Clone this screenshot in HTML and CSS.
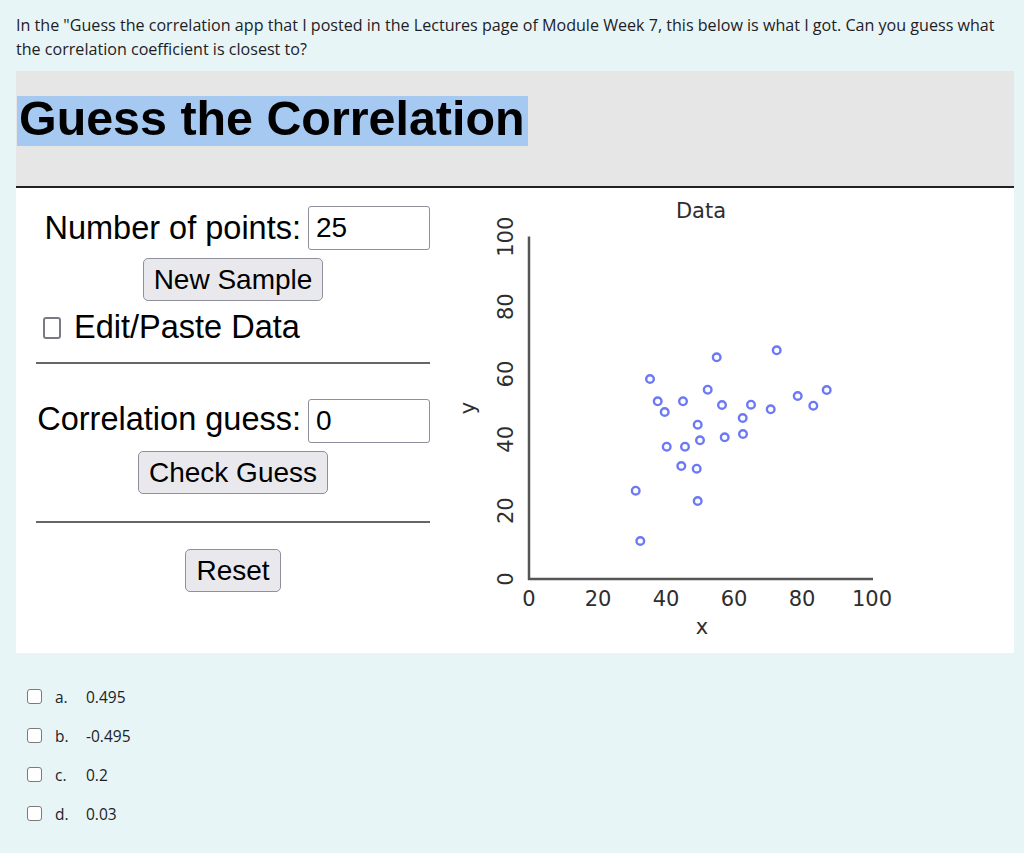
FILE: index.html
```html
<!DOCTYPE html>
<html lang="en">
<head>
<meta charset="utf-8">
<title>Guess the correlation</title>
<link rel="stylesheet" href="styles.css">
</head>
<body>
<p class="question">In the "Guess the correlation app that I posted in the Lectures page of Module Week 7, this below is what I got. Can you guess what<br>the correlation coefficient is closest to?</p>

<div class="shot">
  <div class="shot-head">
    <h1 class="app-title"><span class="hl">Guess the Correlation</span></h1>
  </div>
  <div class="shot-body">
    <div class="panel">
      <div class="field-row end">
        <label class="lbl">Number of points:</label>
        <div class="input">25</div>
      </div>
      <div class="btn-row"><span class="btn">New Sample</span></div>
      <div class="check-row"><span class="cb"></span><span class="lbl">Edit/Paste Data</span></div>
      <div class="rule r1"></div>
      <div class="field-row end r2">
        <label class="lbl up">Correlation guess:</label>
        <div class="input">0</div>
      </div>
      <div class="btn-row"><span class="btn">Check Guess</span></div>
      <div class="rule r3"></div>
      <div class="btn-row r4"><span class="btn">Reset</span></div>
    </div>
    <svg class="chart" width="450" height="460" viewBox="0 0 450 460">
      <text class="ttl" x="251" y="28" text-anchor="middle">Data</text>
      <line class="axis" x1="79" y1="46.5" x2="79" y2="390"/>
      <line class="axis" x1="78" y1="389" x2="423" y2="389"/>
      <g class="tick">
        <text x="79" y="416" text-anchor="middle">0</text>
        <text x="148" y="416" text-anchor="middle">20</text>
        <text x="216" y="416" text-anchor="middle">40</text>
        <text x="284" y="416" text-anchor="middle">60</text>
        <text x="352" y="416" text-anchor="middle">80</text>
        <text x="422" y="416" text-anchor="middle">100</text>
        <text x="252" y="444" text-anchor="middle">x</text>
        <text x="63" y="389" text-anchor="middle" transform="rotate(-90 63 389)">0</text>
        <text x="63" y="320.7" text-anchor="middle" transform="rotate(-90 63 320.7)">20</text>
        <text x="63" y="249.3" text-anchor="middle" transform="rotate(-90 63 249.3)">40</text>
        <text x="63" y="184" text-anchor="middle" transform="rotate(-90 63 184)">60</text>
        <text x="63" y="116.7" text-anchor="middle" transform="rotate(-90 63 116.7)">80</text>
        <text x="63" y="46.7" text-anchor="middle" transform="rotate(-90 63 46.7)">100</text>
        <text x="25" y="218" text-anchor="middle" transform="rotate(-90 25 218)">y</text>
      </g>
      <g class="pts">
        <circle cx="266.7" cy="167.3" r="3.8"/>
        <circle cx="326.7" cy="160.3" r="3.8"/>
        <circle cx="200" cy="189" r="3.8"/>
        <circle cx="257.7" cy="199.7" r="3.8"/>
        <circle cx="376.7" cy="200" r="3.8"/>
        <circle cx="347.7" cy="206" r="3.8"/>
        <circle cx="207.7" cy="211.3" r="3.8"/>
        <circle cx="233" cy="211.3" r="3.8"/>
        <circle cx="272" cy="215" r="3.8"/>
        <circle cx="301" cy="214.7" r="3.8"/>
        <circle cx="363.3" cy="215.7" r="3.8"/>
        <circle cx="320.7" cy="219.3" r="3.8"/>
        <circle cx="214.7" cy="222" r="3.8"/>
        <circle cx="292.7" cy="228" r="3.8"/>
        <circle cx="247.7" cy="234.7" r="3.8"/>
        <circle cx="293" cy="244" r="3.8"/>
        <circle cx="250" cy="250.3" r="3.8"/>
        <circle cx="274.7" cy="247.3" r="3.8"/>
        <circle cx="216.7" cy="256.7" r="3.8"/>
        <circle cx="235" cy="256.7" r="3.8"/>
        <circle cx="231.3" cy="276" r="3.8"/>
        <circle cx="246.7" cy="278.7" r="3.8"/>
        <circle cx="185.7" cy="300.7" r="3.8"/>
        <circle cx="247.7" cy="311" r="3.8"/>
        <circle cx="190.3" cy="351" r="3.8"/>
      </g>
    </svg>
  </div>
</div>

<ul class="options">
  <li><span class="ocb"></span><span class="ol">a.</span><span class="ov">0.495</span></li>
  <li><span class="ocb"></span><span class="ol">b.</span><span class="ov">-0.495</span></li>
  <li><span class="ocb"></span><span class="ol">c.</span><span class="ov">0.2</span></li>
  <li><span class="ocb"></span><span class="ol">d.</span><span class="ov">0.03</span></li>
</ul>
</body>
</html>
```

FILE: styles.css
```css
html, body {
  margin: 0;
  padding: 0;
}
body {
  background: #e8f5f7;
  font-family: "Open Sans", "Noto Sans", sans-serif;
  color: #1d2125;
  width: 1024px;
  height: 853px;
  overflow: hidden;
}
.question {
  margin: 0;
  padding: 13px 0 0 16px;
  font-size: 16.1px;
  line-height: 24px;
  white-space: nowrap;
}
.shot {
  margin: 10px 0 0 16px;
  width: 998px;
}
.shot-head {
  background: #e6e6e6;
  border-bottom: 2px solid #222;
  padding-top: 25px;
  box-sizing: border-box;
  height: 117px;
}
.app-title {
  margin: 0 0 0 1px;
  font-family: "Liberation Sans", Arial, sans-serif;
  font-weight: bold;
  font-size: 48.4px;
  line-height: 44px;
  color: #000;
}
.hl {
  display: inline-block;
  background: #a6c9f2;
  padding: 0 3px 6px 2px;
  height: 50px;
  box-sizing: border-box;
}
.shot-body {
  background: #fff;
  height: 465px;
  display: flex;
  padding-left: 20px;
  gap: 20px;
}
.panel {
  width: 394px;
  flex: none;
  font-family: "Liberation Sans", Arial, sans-serif;
  color: #000;
  display: flex;
  flex-direction: column;
}
.lbl {
  font-size: 32.5px;
  line-height: 37px;
  white-space: nowrap;
  flex: none;
}
.lbl.up {
  margin-bottom: 3px;
}
.field-row {
  display: flex;
  align-items: center;
  gap: 7px;
  height: 44px;
  margin-top: 18px;
}
.field-row.end {
  justify-content: flex-end;
}
.field-row.r2 {
  margin-top: 35px;
}
.input {
  width: 122px;
  height: 44px;
  flex: none;
  box-sizing: border-box;
  border: 1px solid #8f8f9d;
  border-radius: 3px;
  font-size: 28px;
  line-height: 42px;
  padding-left: 7px;
  text-align: left;
  background: #fff;
}
.btn-row {
  display: flex;
  justify-content: center;
  margin-top: 8px;
}
.btn-row.r4 {
  margin-top: 26px;
}
.btn {
  display: inline-block;
  height: 43px;
  box-sizing: border-box;
  border: 1px solid #8f8f9d;
  border-radius: 5px;
  background: #e9e9ed;
  font-size: 28px;
  line-height: 41px;
  padding: 0 10px;
}
.check-row {
  display: flex;
  align-items: center;
  height: 36px;
  margin-top: 8px;
  padding-left: 7px;
}
.cb {
  flex: none;
  width: 18px;
  height: 22px;
  box-sizing: border-box;
  border: 2px solid #7a7a84;
  border-radius: 3px;
  margin: 2px 13px 0 0;
  background: #fff;
}
.rule {
  height: 2px;
  background: #666;
}
.rule.r1 {
  margin-top: 17px;
}
.rule.r3 {
  margin-top: 27px;
}
.chart {
  margin-top: 2px;
  display: block;
  flex: none;
}
.chart text {
  font-family: "DejaVu Sans", Verdana, sans-serif;
  font-size: 21px;
  fill: #2e2e2e;
}
.axis {
  stroke: #555;
  stroke-width: 2.5;
}
.pts circle {
  fill: #fff;
  stroke: #6c79f6;
  stroke-width: 2.4;
}
.options {
  list-style: none;
  margin: 24px 0 0 0;
  padding: 0 0 0 27px;
  font-size: 15.5px;
}
.options li {
  display: flex;
  align-items: center;
  height: 39px;
}
.ocb {
  flex: none;
  width: 15px;
  height: 15px;
  box-sizing: border-box;
  border: 1.5px solid #7a7a7a;
  border-radius: 3px;
  background: #fff;
  margin-right: 13px;
}
.ol {
  width: 31px;
}
```
